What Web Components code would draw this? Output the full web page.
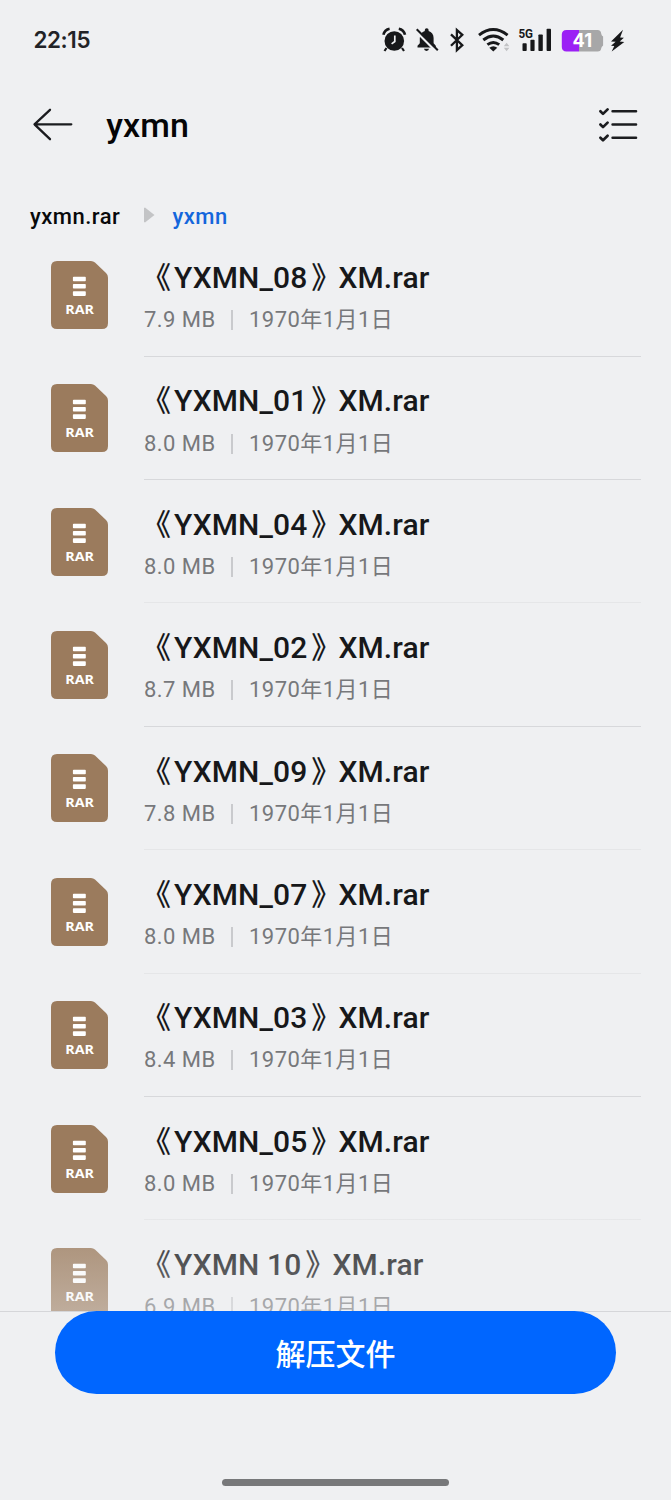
<!DOCTYPE html>
<html lang="zh-CN">
<head>
<meta charset="utf-8">
<title>yxmn</title>
<style>
html,body{margin:0;height:100%;background:#eff0f2}
body{font-family:Roboto,"Noto Sans CJK SC",sans-serif;color:#17181a}
</style>
</head>
<body>
<archive-screen></archive-screen>
<script>
const define = (name, html, setup) => {
  const template = document.createElement('template');
  template.innerHTML = html;
  customElements.define(name, class extends HTMLElement {
    connectedCallback() {
      if (this.shadowRoot) return;
      this.attachShadow({mode: 'open'}).append(template.content.cloneNode(true));
      if (setup) setup(this.shadowRoot, this);
    }
  });
};

define('status-bar', `
<style>
:host{display:flex;height:80px;padding:0 41px 0 33.5px;align-items:center;justify-content:space-between;box-sizing:border-box}
time{font:600 22.4px/26px Inter,sans-serif;letter-spacing:-.4px;color:#222327}
svg{display:block;width:250px;height:30px}
</style>
<time>22:15</time>
<svg viewBox="380 25 250 30" fill="#17181a">
  <g><circle cx="394.3" cy="41" r="9.8"/><path d="M386.5 48l-2 3M402 48l2 3" stroke="#17181a" stroke-width="2.2"/>
  <path d="M383.4 34.8q1.2-5 6.2-6M398.8 28.8q5 1 6.2 6" stroke="#17181a" stroke-width="2.6" fill="none"/>
  <path d="M394.8 35.5v6l-3.2 2.4" stroke="#eff0f2" stroke-width="1.7" fill="none"/></g>
  <path d="M417.5 47.5v-1.8l2.3-2.5V38c0-3.5 2-6.1 5-6.9v-1a1.9 1.9 0 0 1 3.8 0v1c3 .8 5 3.4 5 6.9v5.2l2.2 2.5v1.8zM424 48.8h5q-.2 2.1-2.5 2.1t-2.5-2.1z"/>
  <path d="M415.7 31L435.5 50.8" stroke="#eff0f2" stroke-width="2.4"/><path d="M416.7 29.3L437.8 50.2" stroke="#17181a" stroke-width="2"/>
  <path d="M451 34.4l11.3 10.8-5.4 5V30l5.4 4.8L451 45.8" fill="none" stroke="#17181a" stroke-width="2.3"/>
  <g fill="none" stroke="#17181a" stroke-width="2.9"><path d="M479 35.2q14.2-11.2 28.6 0M483.3 40q10-8 20 0M487.4 44.6q5.9-4.4 11.8 0"/></g>
  <path d="M489.3 47.8q4-3.2 8 0l-4 3.7z"/>
  <path d="M503.8 46.2l2.8-3.4 2.8 3.4zM503.8 47.8l2.8 3.4 2.8-3.4z" fill="#c2c3c5"/>
  <text x="518.4" y="38" font-family="Roboto,sans-serif" font-size="12.4" font-weight="700" textLength="14.6" lengthAdjust="spacingAndGlyphs">5G</text>
  <rect x="522.5" y="43.3" width="4.2" height="7.8" rx=".8"/><rect x="530.4" y="39.8" width="4.2" height="11.3" rx=".8"/><rect x="538.4" y="34.5" width="4.4" height="16.6" rx=".8"/><rect x="546.6" y="28.8" width="4.4" height="22.3" rx=".8"/>
  <path d="M566 30h31.5q3.5 0 3.8 4 .3 1.5 1.8 2.5v9q-1.5 1-1.8 2.5-.3 3.5-3.8 3.5H579V30z" fill="#a7a7a8"/>
  <path d="M566.5 30H579v21.5h-12.5q-4.7 0-4.7-4.7v-12q0-4.8 4.7-4.8z" fill="#9b20f5"/>
  <text x="572.5" y="47.4" font-family="Inter,sans-serif" font-size="18.5" font-weight="700" fill="#fff" textLength="19.5" lengthAdjust="spacingAndGlyphs">41</text>
  <path d="M623 29.8L611 41.4l4.6.4-4.6 4 3.3.3-2.6 5.4L624.3 42l-4.6-.4 4.2-3.8-3.8-.4z"/>
</svg>`);

define('title-bar', `
<style>
:host{display:flex;height:90px;padding:0 33px 0 32px;align-items:center;box-sizing:border-box}
svg{display:block;fill:none;stroke:#1b1c1f;stroke-linecap:round;stroke-linejoin:round}
h1{margin:0 auto 0 33.3px;font-size:34px;line-height:40px;font-weight:500;letter-spacing:.1px;color:#050506}
</style>
<svg width="41" height="36" viewBox="32 107 41 36" stroke-width="2.3"><path d="M71.3 124.3H34.5M50 109.8L34.5 124.3 50 139.2"/></svg>
<h1><slot></slot></h1>
<svg width="40" height="38" viewBox="598 106 40 38" stroke-width="2.6"><path d="M612.6 111.3H636M612.6 124.5H636M612.6 137.7H636"/><path stroke-width="2.7" d="M600.4 111.3l2.6 2.6 4.6-4.5M600.4 124.5l2.6 2.6 4.6-4.5M600.4 137.7l2.6 2.6 4.6-4.5"/></svg>`);

define('crumb-trail', `
<style>
:host{display:flex;height:63.4px;padding:31px 30px 0;align-items:flex-start;box-sizing:border-box;font-size:22px;font-weight:500;line-height:32px;letter-spacing:.5px;color:#08090a}
svg{margin:6px 17px 0 24px}
b{font-weight:500;color:#1466dc}
</style>
<span>yxmn.rar</span><svg width="11" height="16" viewBox="0 0 11 16"><path d="M0 1L1 .5 10.5 8 1 15.5 0 15z" fill="#c3c4c6"/></svg><b>yxmn</b>`);

define('rar-icon', `
<style>:host{display:block;width:57px;height:68px}svg{display:block}</style>
<svg width="57" height="68" viewBox="0 0 57 68">
<path d="M6 0H40q2.2 0 4 1.6L55 12q2 1.9 2 4.4V62q0 6-6 6H6q-6 0-6-6V6Q0 0 6 0z" fill="#9b7b5d"/>
<path d="M22.7 15.8H34q.8 0 .8.8v2.8q0 .8-.8.8H22.7q-.8 0-.8-.8v-2.8q0-.8.8-.8zm0 7.2H34q.8 0 .8.8v2.9q0 .8-.8.8H22.7q-.8 0-.8-.8v-2.9q0-.8.8-.8zm0 7.3H34q.8 0 .8.8v3q0 .8-.8.8H22.7q-.8 0-.8-.8v-3q0-.8.8-.8z" fill="#fff"/>
<text x="14.2" y="52.5" font-family="'Open Sans',sans-serif" font-size="13.2" font-weight="700" fill="#fff" textLength="28.8" lengthAdjust="spacingAndGlyphs">RAR</text>
</svg>`);

define('file-row', `
<style>
:host{display:flex;height:123.37px;padding:0 30px 0 51px;box-sizing:border-box}
rar-icon{margin:27.6px 36px 0 0;flex:none}
.body{flex:1;border-bottom:1px solid #d7d8db;box-sizing:border-box;padding-top:26.7px;white-space:nowrap}
:host([soft]) .body{border-color:#e5e6e8}
.name{font-size:30px;line-height:36px;font-weight:500;height:36px;letter-spacing:.1px}
.open{margin:0 3px 0 -3px}
.close{margin:0 -3px 0 4px}
.meta{display:flex;align-items:center;height:30px;margin-top:9.1px;font-size:22px;line-height:30px;letter-spacing:.45px;color:#77787b}
.size{width:87px}
i{width:2px;height:20px;background:#c9cacd;margin-right:16px}
</style>
<rar-icon></rar-icon>
<div class="body"><div class="name"><span class="open">《</span><slot></slot><span class="close">》</span>XM.rar</div><div class="meta"><span class="size"></span><i></i><span>1970年1月1日</span></div></div>`,
(root, host) => { root.querySelector('.size').textContent = host.getAttribute('size'); });

define('file-list', `
<style>
:host{display:block;position:relative;height:1077.6px;overflow:hidden}
:host::after{content:"";position:absolute;left:0;right:0;bottom:0;height:92px;background:linear-gradient(rgba(239,240,242,.14),rgba(239,240,242,.25) 40%,rgba(239,240,242,.42))}
</style><slot></slot>`);

define('extract-footer', `
<style>
:host{display:flex;flex-direction:column;align-items:center;height:189px;box-sizing:border-box;background:linear-gradient(#d5d6d9 1px,#eff0f2 1px)}
button{width:561px;height:83px;border:0;border-radius:42px;background:#0066ff;color:#fff;font:500 30px/40px Roboto,"Noto Sans CJK SC",sans-serif;padding:5px 0 0}
span{width:227px;height:7px;border-radius:4px;background:#77787a;margin-top:auto;margin-bottom:14px}
</style>
<button><slot></slot></button><span></span>`);

const files = [['YXMN_08','7.9'],['YXMN_01','8.0'],['YXMN_04','8.0',1],['YXMN_02','8.7'],['YXMN_09','7.8',1],['YXMN_07','8.0',1],['YXMN_03','8.4'],['YXMN_05','8.0',1],['YXMN 10','6.9']];
define('archive-screen', `
<style>:host{display:block;width:671px;height:1500px;overflow:hidden;background:#eff0f2}</style>
<status-bar></status-bar><title-bar>yxmn</title-bar><crumb-trail></crumb-trail>
<file-list>${files.map(([name, size, soft]) => `<file-row size="${size} MB"${soft ? ' soft' : ''}>${name}</file-row>`).join('')}</file-list>
<extract-footer>解压文件</extract-footer>`);
</script>
</body>
</html>
